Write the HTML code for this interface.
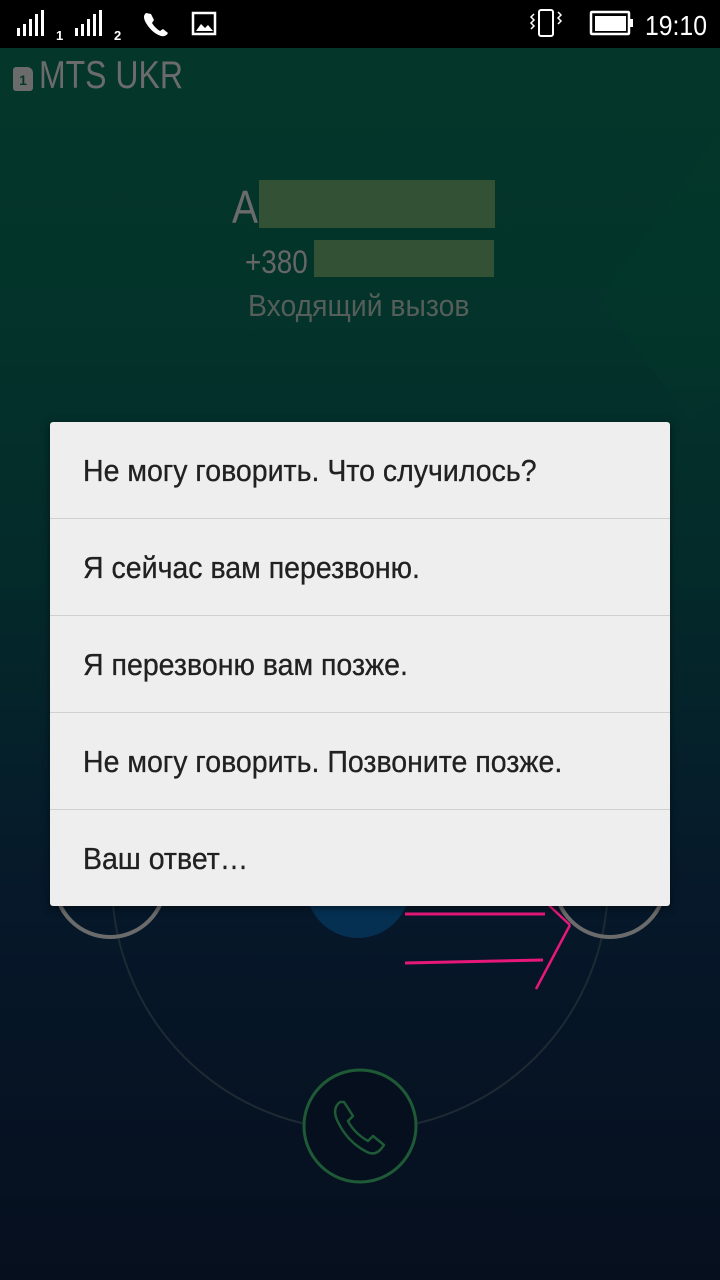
<!DOCTYPE html>
<html><head><meta charset="utf-8"><style>
*{margin:0;padding:0;box-sizing:border-box}
body{width:720px;height:1280px;overflow:hidden;position:relative;font-family:"Liberation Sans",sans-serif;
background:linear-gradient(180deg,#04372a 0%,#03332a 25%,#042a2a 45%,#06182a 70%,#060f1e 100%);}
.sb{position:absolute;left:0;top:0;width:720px;height:48px;background:#000;color:#fff}
.abs{position:absolute}
.dlg{position:absolute;left:50px;top:422px;width:620px;height:484px;background:#eeeeee;border-radius:3px;box-shadow:0 2px 8px rgba(0,0,0,.5)}
.it{height:97px;border-bottom:1px solid #d0d0d0;padding-left:33px;line-height:97px;font-size:31px;color:#212121;white-space:nowrap;-webkit-text-stroke:0.3px #212121}
.it span{display:inline-block;transform:scaleX(0.92);transform-origin:left center}
.it:last-child{border-bottom:none}
.n{display:inline-block;transform-origin:left center}
</style></head><body>
<svg class="abs" style="left:0;top:0" width="720" height="1280">
<polygon points="720,130 600,300 690,420 720,400" fill="#06402e" opacity=".15"/>
<circle cx="360" cy="882" r="248" fill="none" stroke="#1e2a33" stroke-width="2"/>
<circle cx="110" cy="882" r="55" fill="none" stroke="#6b6b6b" stroke-width="4"/>
<circle cx="610" cy="882" r="55" fill="none" stroke="#6b6b6b" stroke-width="4"/>
<circle cx="358" cy="886" r="52" fill="#053052"/>
<line x1="405" y1="914" x2="545" y2="914" stroke="#e8177a" stroke-width="3"/>
<line x1="405" y1="963" x2="543" y2="960" stroke="#e8177a" stroke-width="3"/>
<line x1="525" y1="883" x2="570" y2="925" stroke="#e8177a" stroke-width="2.5"/>
<line x1="570" y1="925" x2="536" y2="989" stroke="#e8177a" stroke-width="2.5"/>
<circle cx="360" cy="1126" r="56" fill="#060f1e" stroke="#1e5a35" stroke-width="3"/>
<path d="M340 1102 q-8 6 -3 18 q10 22 30 32 q8 4 14 -3 l3 -4 -11 -9 -5 5 q-14 -8 -20 -20 l5 -5 -9 -14 z" fill="none" stroke="#1e5a35" stroke-width="2.5" stroke-linejoin="round"/>
</svg>
<div class="sb">
<svg width="720" height="48">
<g fill="#fff">
<rect x="17" y="28" width="3" height="8"/><rect x="23" y="24" width="3" height="12"/><rect x="29" y="19" width="3" height="17"/><rect x="35" y="14" width="3" height="22"/><rect x="41" y="10" width="3" height="26"/>
<rect x="75" y="28" width="3" height="8"/><rect x="81" y="24" width="3" height="12"/><rect x="87" y="19" width="3" height="17"/><rect x="93" y="14" width="3" height="22"/><rect x="99" y="10" width="3" height="26"/>
<text x="56" y="40" font-size="13" font-family="Liberation Sans" font-weight="bold">1</text>
<text x="114" y="40" font-size="13" font-family="Liberation Sans" font-weight="bold">2</text>
<path d="M146 13 q-4 3 0 10 q6 10 15 13 q5 1 7 -3 l-5 -4 -3 2 q-5 -3 -8 -8 l2 -3 -3 -6 z"/>
<rect x="193" y="13" width="22" height="21" fill="none" stroke="#fff" stroke-width="2.5"/>
<path d="M196 31 l5 -7 4 4 3 -3 5 6 z"/>
<rect x="591" y="12" width="38" height="22" rx="1" fill="none" stroke="#fff" stroke-width="2.5"/>
<rect x="595" y="16" width="31" height="15"/><rect x="630" y="19" width="3" height="8"/>
<rect x="539" y="10" width="14" height="26" rx="2" fill="none" stroke="#fff" stroke-width="2"/>
<text x="645" y="35" font-size="28" font-family="Liberation Sans" textLength="62" lengthAdjust="spacingAndGlyphs">19:10</text>
</g>
<path d="M534 14 l-3 3 3 3 -3 3 3 3 -3 3 M558 12 l3 3 -3 3 3 3 -3 3" stroke="#fff" fill="none" stroke-width="1.5"/>
</svg>
</div>
<div class="abs" style="left:13px;top:67px;width:20px;height:24px;background:#6b6b6b;border-radius:3px 6px 3px 3px;color:#04372a;font-size:14px;font-weight:bold;text-align:center;line-height:26px">1</div>
<div class="abs" style="left:39px;top:54px;font-size:39px;color:#6b6b6b"><span class="n" style="transform:scaleX(0.82)">MTS UKR</span></div>
<div class="abs" style="left:232px;top:180px;font-size:46px;color:#6b6b6b"><span class="n" style="transform:scaleX(0.85)">A</span></div>
<div class="abs" style="left:259px;top:180px;width:236px;height:48px;background:#335235"></div>
<div class="abs" style="left:245px;top:244px;font-size:32px;color:#666"><span class="n" style="transform:scaleX(0.87)">+380</span></div>
<div class="abs" style="left:314px;top:240px;width:180px;height:37px;background:#335235"></div>
<div class="abs" style="left:248px;top:288px;font-size:31px;color:#555e58"><span class="n" style="transform:scaleX(0.915)">Входящий вызов</span></div>
<div class="dlg">
<div class="it"><span>Не могу говорить. Что случилось?</span></div>
<div class="it"><span>Я сейчас вам перезвоню.</span></div>
<div class="it"><span>Я перезвоню вам позже.</span></div>
<div class="it"><span>Не могу говорить. Позвоните позже.</span></div>
<div class="it"><span>Ваш ответ…</span></div>
</div>
</body></html>
